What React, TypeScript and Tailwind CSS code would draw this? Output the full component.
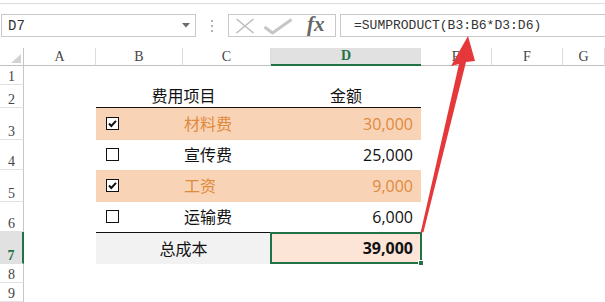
import React from "react";

const PEACH = "bg-[#f9d3b6]";

function CheckBox({ checked }: { checked: boolean }) {
  return (
    <svg width="13" height="13" viewBox="0 0 13 13" className="block">
      <rect x="0.5" y="0.5" width="12" height="12" fill="#fff" stroke="#111" strokeWidth="1" />
      {checked && (
        <path d="M3 6.5 L5.3 9 L10 3.8" fill="none" stroke="#111" strokeWidth="2" strokeLinejoin="miter" />
      )}
    </svg>
  );
}

function RowHead({ n, h, active }: { n: number; h: string; active?: boolean }) {
  return (
    <div
      className={`w-[24px] shrink-0 flex items-end justify-center leading-[14px] text-[14px] ${
        active
          ? "bg-[#e1e1e1] border-r-2 border-r-[#217346] text-[#217346] font-bold"
          : "border-r border-r-[#c6c6c6] text-[#444]"
      } border-b border-b-[#e1e1e1] ${h}`}
      style={{ fontFamily: '"Liberation Serif", serif' }}
    >
      {n}
    </div>
  );
}

type DataRow = {
  n: number;
  h: string;
  checked: boolean;
  name: string;
  amount: string;
  hl: boolean;
};

const rows: DataRow[] = [
  { n: 3, h: "h-[32px]", checked: true, name: "材料费", amount: "30,000", hl: true },
  { n: 4, h: "h-[30px]", checked: false, name: "宣传费", amount: "25,000", hl: false },
  { n: 5, h: "h-[32px]", checked: true, name: "工资", amount: "9,000", hl: true },
  { n: 6, h: "h-[30px]", checked: false, name: "运输费", amount: "6,000", hl: false },
];

export default function App() {
  const cellFont = { fontFamily: '"Open Sans", "Noto Sans CJK SC", sans-serif' };
  const colHeads: { l: string; w: string; active?: boolean }[] = [
    { l: "A", w: "w-[72px]" },
    { l: "B", w: "w-[87px]" },
    { l: "C", w: "w-[88px]" },
    { l: "D", w: "w-[150px]", active: true },
    { l: "E", w: "w-[71px]" },
    { l: "F", w: "w-[71px]" },
    { l: "G", w: "flex-1" },
  ];
  return (
    <div className="relative w-[605px] h-[302px] overflow-hidden bg-white flex flex-col">
      {/* formula bar */}
      <div className="mt-[3px] border-t border-[#dcdcdc] pt-[10px] pb-[11px]">
        <div className="h-[23px] flex">
          <div className="ml-[1px] w-[195px] border border-[#c8c8c8] flex items-center justify-between pl-[6px] pr-[5px]">
            <span className="text-[14px] text-[#333] leading-none" style={{ fontFamily: '"Liberation Mono", monospace' }}>
              D7
            </span>
            <svg width="8" height="5" viewBox="0 0 8 5">
              <path d="M0 0 H8 L4 4.5 Z" fill="#6b6b6b" />
            </svg>
          </div>
          <div className="w-[32px] flex flex-col items-center justify-center gap-[3px]">
            <div className="w-[2px] h-[2px] bg-[#b4b4b4]" />
            <div className="w-[2px] h-[2px] bg-[#b4b4b4]" />
            <div className="w-[2px] h-[2px] bg-[#b4b4b4]" />
          </div>
          <div className="w-[108px] border border-[#c8c8c8] flex items-center">
            <svg width="20" height="16" viewBox="0 0 20 16" className="ml-[6px]">
              <path d="M1.5 1 L18.5 15 M18.5 1 L1.5 15" stroke="#bdbdbd" strokeWidth="1.6" fill="none" />
            </svg>
            <svg width="30" height="17" viewBox="0 0 30 17" className="ml-[8px] mt-[2px]">
              <path d="M1.5 9 L9.5 15 L28.5 1.5" stroke="#c6c6c6" strokeWidth="3" fill="none" strokeLinejoin="round" />
            </svg>
            <span
              className="ml-[14px] italic font-bold text-[21px] leading-none text-[#666] -mt-[2px]"
              style={{ fontFamily: '"Liberation Serif", serif' }}
            >
              fx
            </span>
          </div>
          <div className="ml-[4px] flex-1 border border-r-0 border-[#c8c8c8] flex items-center pl-[13px]">
            <span className="text-[13px] text-[#333] leading-none" style={{ fontFamily: '"Liberation Mono", monospace' }}>
              =SUMPRODUCT(B3:B6*D3:D6)
            </span>
          </div>
        </div>
      </div>

      {/* column headers */}
      <div className="flex h-[18px]">
        <div className="w-[24px] shrink-0 border-r border-r-[#c6c6c6] border-b border-b-[#c0c0c0] flex items-end justify-end pr-[2px] pb-[2px]">
          <svg width="10" height="9" viewBox="0 0 10 9">
            <path d="M10 0 V9 H0 Z" fill="#d3d3d3" />
          </svg>
        </div>
        {colHeads.map((c) => (
          <div
            key={c.l}
            className={`${c.w} shrink-0 flex items-center justify-center text-[14px] leading-none ${
              c.active
                ? "bg-[#e1e1e1] border-b-2 border-b-[#217346] text-[#217346] font-bold"
                : "border-r border-r-[#dcdcdc] border-b border-b-[#c0c0c0] text-[#444]"
            }`}
            style={{ fontFamily: '"Liberation Serif", serif' }}
          >
            {c.l}
          </div>
        ))}
      </div>

      {/* row 1 */}
      <div className="flex h-[19px]">
        <RowHead n={1} h="h-[19px]" />
      </div>

      {/* row 2 */}
      <div className="flex h-[23px]" style={cellFont}>
        <RowHead n={2} h="h-[23px]" />
        <div className="w-[72px] shrink-0" />
        <div className="w-[175px] shrink-0 border-b border-[#111] flex items-center justify-center text-[16px] text-[#111]">
          费用项目
        </div>
        <div className="w-[150px] shrink-0 border-b border-[#111] flex items-center justify-center text-[16px] text-[#111]">
          金额
        </div>
      </div>

      {/* rows 3-6 */}
      {rows.map((r) => (
        <div key={r.n} className={`flex ${r.h}`} style={cellFont}>
          <RowHead n={r.n} h={r.h} />
          <div className="w-[72px] shrink-0" />
          <div className={`w-[87px] shrink-0 flex items-center pl-[10px] pb-[1px] ${r.hl ? PEACH : ""}`}>
            <CheckBox checked={r.checked} />
          </div>
          <div
            className={`w-[88px] shrink-0 flex items-center pl-[1px] text-[16px] ${
              r.hl ? `${PEACH} text-[#e08a3c]` : "text-[#111]"
            }`}
          >
            {r.name}
          </div>
          <div
            className={`w-[150px] shrink-0 flex items-center justify-end pr-[8px] text-[16px] ${
              r.hl ? `${PEACH} text-[#e08a3c]` : "text-[#111]"
            }`}
          >
            {r.amount}
          </div>
        </div>
      ))}

      {/* row 7 */}
      <div className="flex h-[32px]" style={cellFont}>
        <RowHead n={7} h="h-[32px]" active />
        <div className="w-[72px] shrink-0" />
        <div className="w-[175px] shrink-0 bg-[#f2f2f2] border-t border-[#111] flex items-center justify-center text-[16px] text-[#111]">
          总成本
        </div>
        <div className="relative w-[150px] shrink-0 bg-[#fce5d7] flex items-center justify-end pr-[8px] text-[16px] font-bold text-[#111]">
          39,000
          <div className="absolute -left-px -right-px top-0 bottom-0 border-2 border-[#217346]" />
          <div className="absolute -right-[3px] -bottom-[2px] w-[6px] h-[6px] bg-[#217346] border border-white" />
        </div>
      </div>

      {/* rows 8-9 */}
      <div className="flex h-[19px]">
        <RowHead n={8} h="h-[19px]" />
      </div>
      <div className="flex h-[19px]">
        <RowHead n={9} h="h-[19px]" />
      </div>

      {/* red arrow annotation */}
      <svg className="absolute inset-0 pointer-events-none" width="605" height="302" viewBox="0 0 605 302">
        <polygon
          points="468,36 475,61 466,62 423.5,232 420.5,233 459,64 451,66"
          fill="#e5383b"
        />
      </svg>
    </div>
  );
}
